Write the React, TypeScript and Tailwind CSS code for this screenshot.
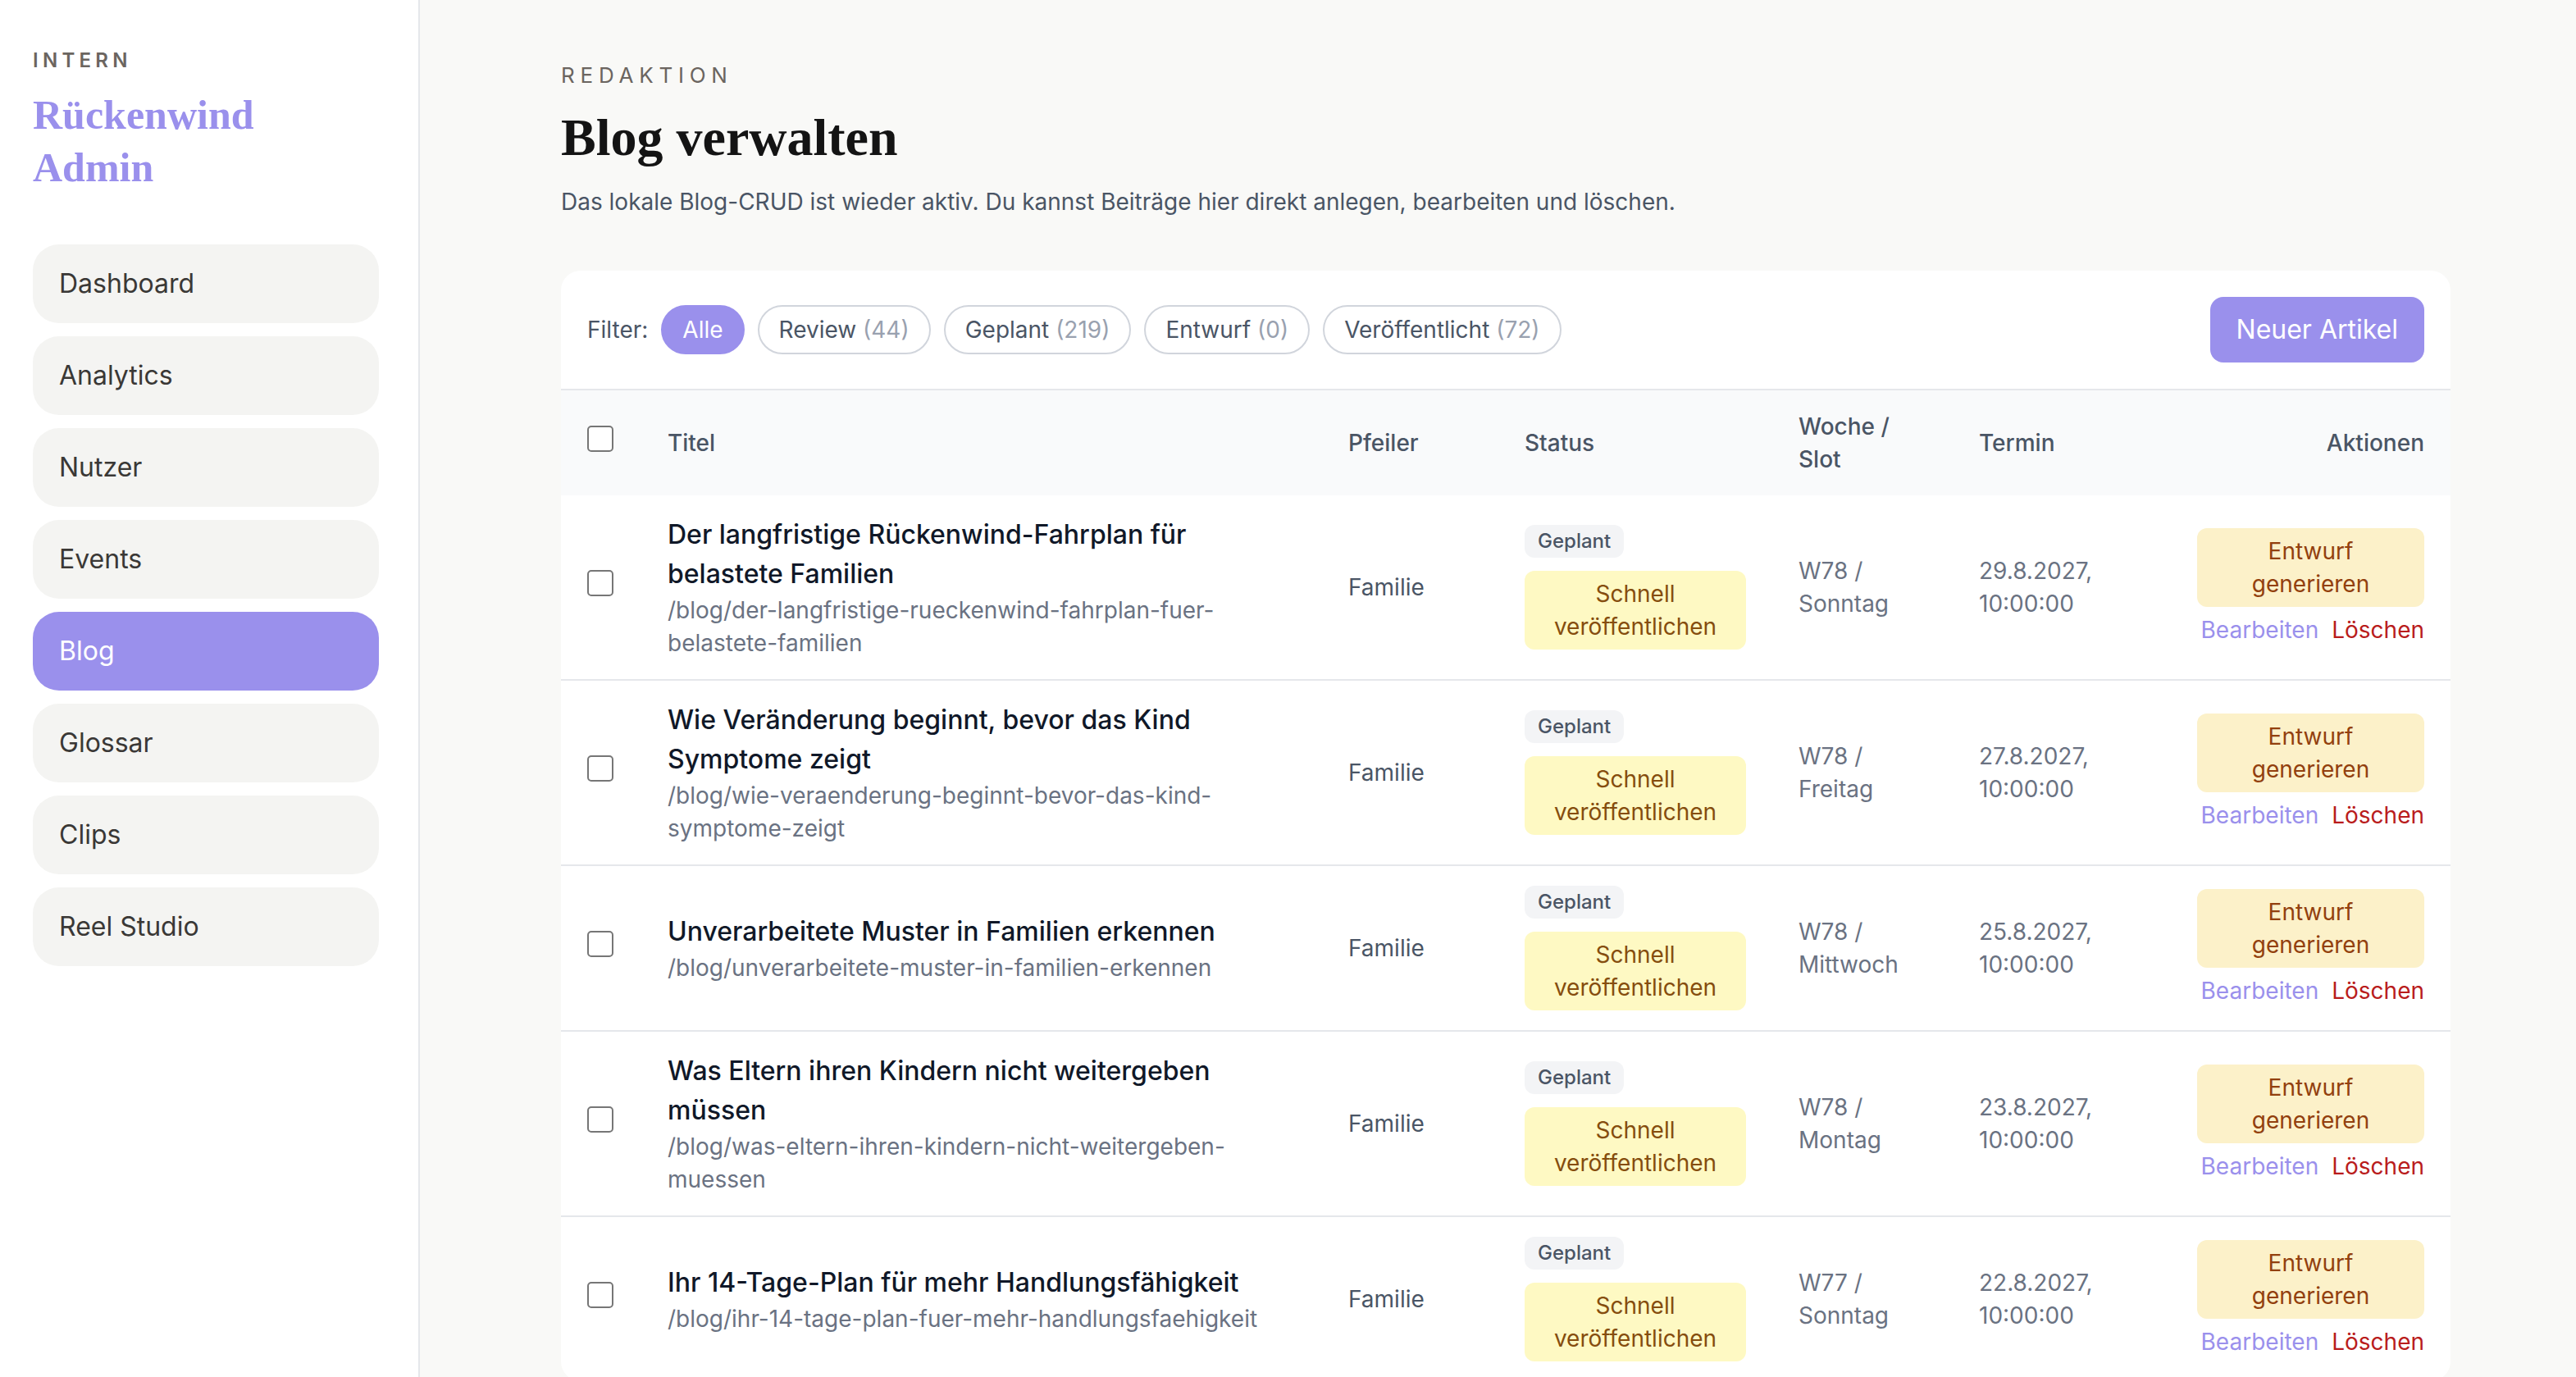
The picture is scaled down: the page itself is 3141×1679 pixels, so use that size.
import React from "react";

const nav = ["Dashboard", "Analytics", "Nutzer", "Events", "Blog", "Glossar", "Clips", "Reel Studio"];

const rows = [
  {
    title: "Der langfristige Rückenwind-Fahrplan für belastete Familien",
    slug: "/blog/der-langfristige-rueckenwind-fahrplan-fuer-belastete-familien",
    week: "W78 /",
    day: "Sonntag",
    date: "29.8.2027,",
  },
  {
    title: "Wie Veränderung beginnt, bevor das Kind Symptome zeigt",
    slug: "/blog/wie-veraenderung-beginnt-bevor-das-kind-symptome-zeigt",
    week: "W78 /",
    day: "Freitag",
    date: "27.8.2027,",
  },
  {
    title: "Unverarbeitete Muster in Familien erkennen",
    slug: "/blog/unverarbeitete-muster-in-familien-erkennen",
    week: "W78 /",
    day: "Mittwoch",
    date: "25.8.2027,",
  },
  {
    title: "Was Eltern ihren Kindern nicht weitergeben müssen",
    slug: "/blog/was-eltern-ihren-kindern-nicht-weitergeben-muessen",
    week: "W78 /",
    day: "Montag",
    date: "23.8.2027,",
  },
  {
    title: "Ihr 14-Tage-Plan für mehr Handlungsfähigkeit",
    slug: "/blog/ihr-14-tage-plan-fuer-mehr-handlungsfaehigkeit",
    week: "W77 /",
    day: "Sonntag",
    date: "22.8.2027,",
  },
];

const filters = [
  { label: "Review", count: "(44)" },
  { label: "Geplant", count: "(219)" },
  { label: "Entwurf", count: "(0)" },
  { label: "Veröffentlicht", count: "(72)" },
];

export default function App() {
  return (
    <div className="[zoom:2] flex min-h-[840px] bg-[#f9f9f7] font-['Inter',sans-serif] text-gray-900">
      <aside className="w-64 shrink-0 border-r border-gray-200 bg-white pl-5 pr-6 pt-[29px]">
        <div className="text-xs leading-4 font-semibold tracking-[0.22em] text-[#6b6560]">INTERN</div>
        <div className="mt-[9px] font-['Liberation_Serif',serif] text-[25px] leading-8 font-bold text-[#9a90ec]">
          Rückenwind
          <br />
          Admin
        </div>
        <nav className="mt-[31px] flex flex-col gap-2">
          {nav.map((n) => (
            <div
              key={n}
              className={
                n === "Blog"
                  ? "rounded-2xl bg-[#9a90ec] px-4 py-3 text-base leading-6 text-white"
                  : "rounded-2xl bg-[#f4f4f2] px-4 py-3 text-base leading-6 text-[#3a3836]"
              }
            >
              {n}
            </div>
          ))}
        </nav>
      </aside>

      <main className="flex-1 pl-[86px] pt-9">
        <div className="w-[1152px]">
          <div className="text-[13px] leading-5 tracking-[0.26em] text-[#6b6560]">REDAKTION</div>
          <h1 className="mt-2 font-['Liberation_Serif',serif] text-[32px] leading-10 font-bold text-[#141414]">
            Blog verwalten
          </h1>
          <p className="mt-[9px] text-sm leading-5 text-gray-600">
            Das lokale Blog-CRUD ist wieder aktiv. Du kannst Beiträge hier direkt anlegen, bearbeiten und löschen.
          </p>

          <div className="mt-8 overflow-hidden rounded-xl bg-white">
            <div className="flex items-center justify-between border-b border-gray-200 p-4">
              <div className="flex items-center gap-2 text-sm leading-5">
                <span className="text-gray-600">Filter:</span>
                <span className="rounded-full border border-[#9a90ec] bg-[#9a90ec] px-3 py-1 text-white">Alle</span>
                {filters.map((f) => (
                  <span key={f.label} className="rounded-full border border-gray-300 px-3 py-1 text-gray-600">
                    {f.label} <span className="text-gray-400">{f.count}</span>
                  </span>
                ))}
              </div>
              <button className="rounded-lg bg-[#9a90ec] px-4 py-2 text-base leading-6 text-white">Neuer Artikel</button>
            </div>

            <table className="w-full table-fixed border-collapse text-sm leading-5">
              <colgroup>
                <col className="w-[49px]" />
                <col className="w-[415px]" />
                <col className="w-[107.5px]" />
                <col className="w-[167px]" />
                <col className="w-[110px]" />
                <col className="w-[133px]" />
                <col className="w-[170.5px]" />
              </colgroup>
              <thead className="bg-gray-50">
                <tr className="text-left font-medium text-gray-600">
                  <th className="px-4 py-3 align-middle font-medium">
                    <input type="checkbox" className="h-4 w-4" />
                  </th>
                  <th className="px-4 py-3 align-middle font-medium">Titel</th>
                  <th className="px-4 py-3 align-middle font-medium">Pfeiler</th>
                  <th className="px-4 py-3 align-middle font-medium">Status</th>
                  <th className="px-4 py-3 align-middle font-medium">Woche / Slot</th>
                  <th className="px-4 py-3 align-middle font-medium">Termin</th>
                  <th className="px-4 py-3 text-right align-middle font-medium">Aktionen</th>
                </tr>
              </thead>
              <tbody className="divide-y divide-gray-200">
                {rows.map((r) => (
                  <tr key={r.slug}>
                    <td className="px-4 py-3 align-middle">
                      <input type="checkbox" className="h-4 w-4" />
                    </td>
                    <td className="px-4 py-3 align-middle">
                      <div className="text-base leading-6 font-medium text-gray-900">{r.title}</div>
                      <div className="text-sm leading-5 text-gray-500">{r.slug}</div>
                    </td>
                    <td className="px-4 py-3 align-middle text-gray-600">Familie</td>
                    <td className="px-4 py-3 align-middle">
                      <div className="flex flex-col items-start gap-2">
                        <span className="rounded-md bg-gray-100 px-2 py-0.5 text-xs leading-4 font-medium text-gray-600">
                          Geplant
                        </span>
                        <button className="w-full rounded-md bg-[#fef9c3] px-3 py-1 text-center text-sm leading-5 text-[#854d0e]">
                          Schnell veröffentlichen
                        </button>
                      </div>
                    </td>
                    <td className="px-4 py-3 align-middle text-gray-500">
                      {r.week}
                      <br />
                      {r.day}
                    </td>
                    <td className="px-4 py-3 align-middle text-gray-500">
                      {r.date}
                      <br />
                      10:00:00
                    </td>
                    <td className="px-4 py-3 align-middle">
                      <div className="flex flex-col items-end gap-1">
                        <button className="w-full rounded-md bg-[#fcf1c9] px-3 py-1 text-center text-sm leading-5 text-[#92400e]">
                          Entwurf generieren
                        </button>
                        <div className="flex gap-2">
                          <span className="text-[#9a90ec]">Bearbeiten</span>
                          <span className="text-[#b91c1c]">Löschen</span>
                        </div>
                      </div>
                    </td>
                  </tr>
                ))}
              </tbody>
            </table>
          </div>
        </div>
      </main>
    </div>
  );
}
